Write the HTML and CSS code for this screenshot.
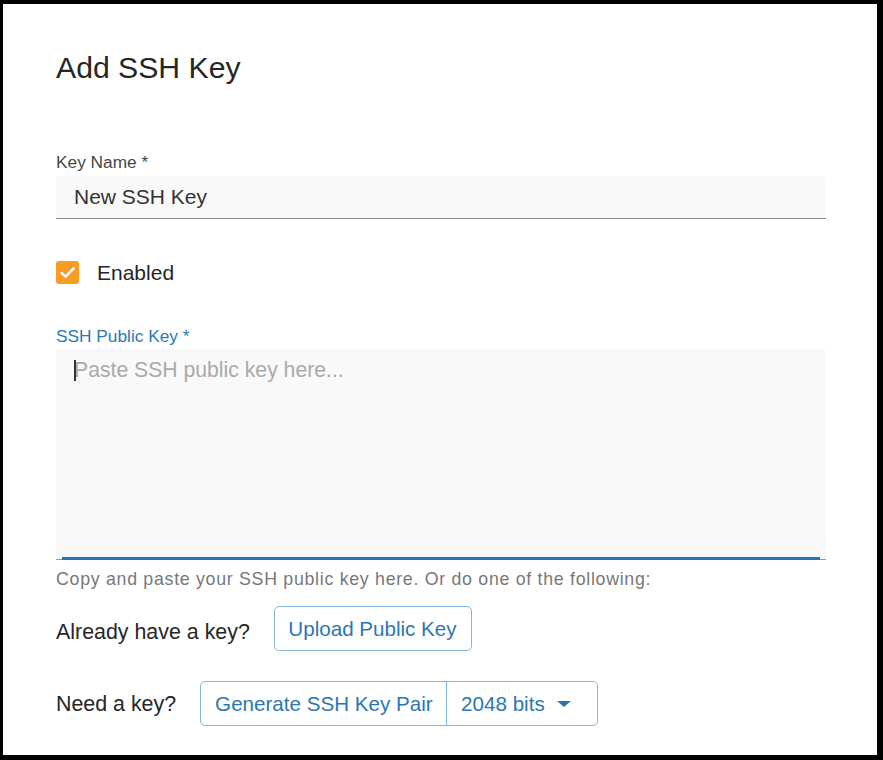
FILE: index.html
```html
<!DOCTYPE html>
<html lang="en">
<head>
  <meta charset="UTF-8" />
  <meta name="viewport" content="width=device-width, initial-scale=1" />
  <title>Add SSH Key</title>
  <link rel="stylesheet" href="styles.css">
</head>
<body>
  <div class="dialog">
    <h1>Add SSH Key</h1>

    <form id="sshForm">
      <label class="field-label" for="keyName">Key Name *</label>
      <input class="text-input" type="text" id="keyName" name="keyName" value="New SSH Key" />

      <label class="check-row">
        <span class="checkbox">
          <svg width="17" height="17" viewBox="0 0 17 17"><path d="M2.5 8.8 L6.6 12.6 L14.6 4.4" fill="none" stroke="#fff" stroke-width="2.4" stroke-linecap="round" stroke-linejoin="round"/></svg>
        </span>
        <span>Enabled</span>
      </label>

      <label class="field-label active" for="publicKey">SSH Public Key *</label>
      <div class="area-wrap">
        <textarea class="key-area" id="publicKey" name="publicKey" placeholder="Paste SSH public key here..."></textarea>
        <span class="caret"></span>
      </div>
      <p class="hint">Copy and paste your SSH public key here. Or do one of the following:</p>

      <div class="action-row upload-row">
        <span class="question">Already have a key?</span>
        <button type="button" class="btn">Upload Public Key</button>
      </div>

      <div class="action-row generate-row">
        <span class="question">Need a key?</span>
        <div class="btn-group">
          <button type="button" class="btn-part">Generate SSH Key Pair</button>
          <button type="button" class="btn-part bits">2048 bits <span class="tri"></span></button>
        </div>
      </div>
    </form>
  </div>
</body>
</html>
```

FILE: styles.css
```css
html, body {
  margin: 0;
  background: #fff;
}
body {
  font-family: "Liberation Sans", Arial, sans-serif;
  color: #222;
}
.dialog {
  box-sizing: border-box;
  height: 760px;
  border-style: solid;
  border-color: #000;
  border-width: 4px 6px 5px 3px;
  padding: 0 51px 0 53px;
  overflow: hidden;
}
h1 {
  margin: 46px 0 0;
  font-size: 30.2px;
  line-height: 36px;
  font-weight: normal;
  color: #262626;
}
.field-label {
  display: block;
  margin-top: 66px;
  font-size: 17.3px;
  line-height: 20px;
  color: #474747;
}
.field-label.active {
  margin-top: 42px;
  color: #2a79b5;
}
.text-input {
  display: block;
  box-sizing: border-box;
  width: 100%;
  height: 43px;
  margin-top: 4px;
  padding: 0 18px;
  border: none;
  border-bottom: 1.4px solid #8c8c8c;
  border-radius: 3px 3px 0 0;
  background: #f9f9f9;
  font-family: inherit;
  font-size: 21px;
  color: #333;
  outline: none;
}
.check-row {
  display: flex;
  align-items: center;
  gap: 18px;
  margin-top: 42px;
  font-size: 21px;
  line-height: 23px;
  color: #262626;
}
.checkbox {
  display: flex;
  align-items: center;
  justify-content: center;
  width: 23px;
  height: 23px;
  border-radius: 3px;
  background: #f89d24;
}
.area-wrap {
  position: relative;
  margin-top: 3px;
}
.key-area {
  display: block;
  box-sizing: border-box;
  width: 100%;
  height: 211px;
  padding: 9px 18px;
  border: none;
  border-bottom: 1.4px solid #9a9a9a;
  border-radius: 3px 3px 0 0;
  background: #f9f9f9;
  font-family: inherit;
  font-size: 21.2px;
  line-height: 24px;
  resize: none;
  outline: none;
}
.key-area::placeholder {
  color: #aaa;
}
.area-wrap::after {
  content: "";
  position: absolute;
  left: 6px;
  right: 6px;
  bottom: 0;
  height: 2.6px;
  background: #2377b4;
}
.caret {
  position: absolute;
  left: 18px;
  top: 11px;
  width: 2px;
  height: 21px;
  background: #333;
}
.hint {
  margin: 9px 0 0;
  font-size: 17.8px;
  line-height: 20px;
  letter-spacing: 0.7px;
  color: #787878;
}
.action-row {
  display: flex;
  align-items: center;
  gap: 24px;
  font-size: 21.4px;
  color: #262626;
}
.upload-row {
  margin-top: 17px;
}
.upload-row .question {
  padding-top: 8px;
}
.generate-row {
  margin-top: 30px;
}
.generate-row .question {
  padding-top: 2px;
}
.btn, .btn-group {
  box-sizing: border-box;
  height: 45px;
  border: 1px solid #86b5dc;
  border-radius: 5px;
  background: #fff;
}
.btn, .btn-part {
  font-family: inherit;
  font-size: 20.6px;
  color: #2a77b4;
  cursor: pointer;
}
.btn {
  padding: 0 14px 0 13.5px;
}
.btn-group {
  display: flex;
}
.btn-part {
  display: flex;
  align-items: center;
  height: 100%;
  padding: 0 13.5px 0 14px;
  border: none;
  background: none;
}
.btn-part.bits {
  border-left: 1px solid #86b5dc;
  padding: 0 26px 0 14px;
  gap: 12px;
}
.tri {
  width: 0;
  height: 0;
  border-left: 7px solid transparent;
  border-right: 7px solid transparent;
  border-top: 6px solid #2a77b4;
}
```
